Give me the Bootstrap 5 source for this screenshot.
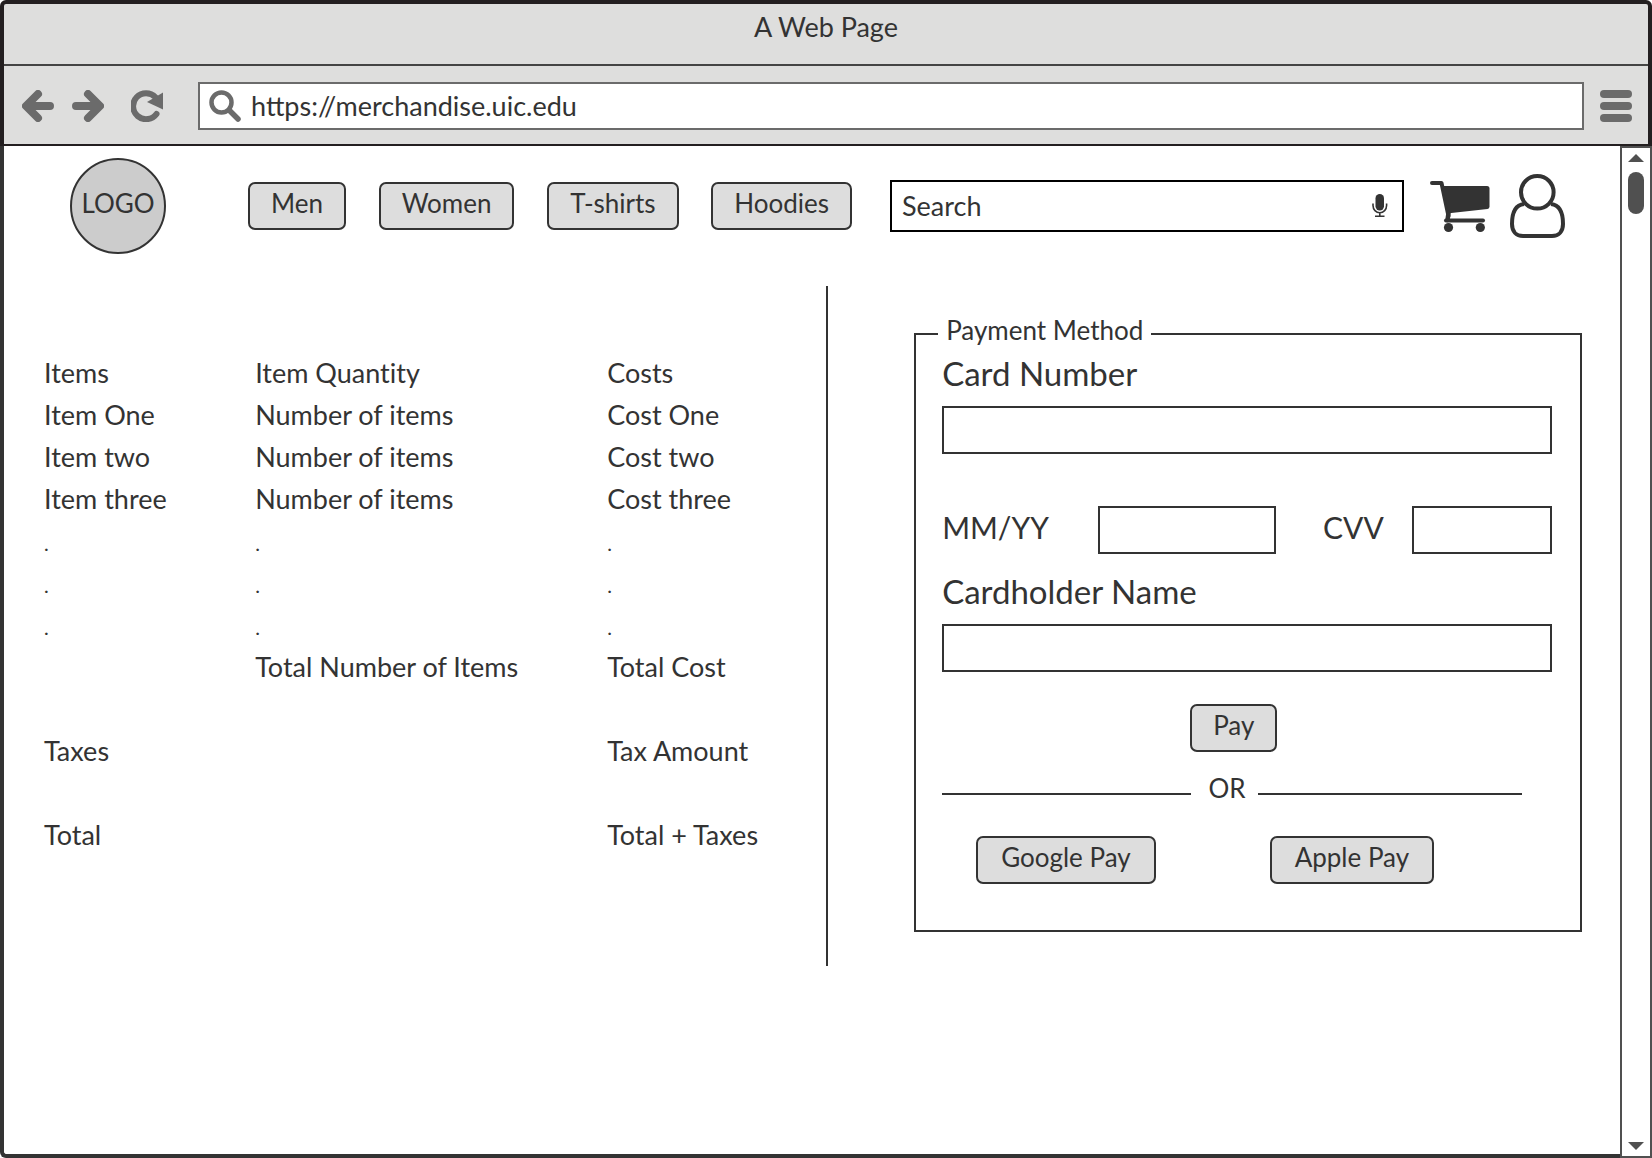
<!DOCTYPE html>
<html lang="en">
<head>
<meta charset="utf-8">
<meta name="viewport" content="width=device-width, initial-scale=1">
<title>A Web Page</title>
<link href="https://cdn.jsdelivr.net/npm/bootstrap@5.3.0/dist/css/bootstrap.min.css" rel="stylesheet">
<style>
  :root { --ink: #333; --frame: #231f20; --tool: #6b6b6b; --bar: #505050; }
  body { font-family: Lato, "Open Sans", sans-serif; font-size: 26px; line-height: 32px; font-variant-ligatures: none; color: var(--ink); background: #fff; }
  svg { display: block; flex: none; }

  .browser-top { background: #dededd; border: 4px solid var(--frame); border-bottom-width: 2px; border-radius: 6px 6px 0 0; }
  .title-strip { height: 62px; padding-top: 7px; border-bottom: 2px solid #444; font-size: 27px; }
  .tool-strip { height: 78px; padding: 2px 16px 0 18px; }
  .tool-btn { border: 0; background: none; padding: 0; color: var(--tool); }
  .tool-pair { gap: 18px; margin-right: 27px; }
  .url-box { height: 48px; background: #fff; border: 2px solid var(--tool); color: var(--tool); padding-left: 9px; margin: 0 16px 0 35px; min-width: 0; }
  .url-box input { border: 0; outline: 0; background: none; color: var(--ink); padding: 0 0 0 10px; min-width: 0; font-size: 27px; }

  .page-area { border-left: 4px solid var(--ink); border-bottom: 4px solid var(--ink); border-radius: 0 0 0 6px; min-width: 0; }
  .scroll-rail { width: 32px; border: 2px solid var(--bar); padding: 6px 0; }
  .scroll-rail svg { fill: var(--bar); }
  .scroll-thumb { width: 16px; height: 42px; border-radius: 8px; background: var(--bar); margin-top: 10px; }

  .site-head { padding: 12px 55px 32px 66px; }
  .logo-disc { width: 96px; height: 96px; border: 2px solid var(--ink); background: #ccc; color: var(--ink); padding-bottom: 6px; margin-right: 82px; flex: none; }
  .shop-nav { width: 604px; margin-right: 38px; }
  .btn-sketch { height: 48px; padding: 0 21px 6px; border: 2px solid var(--ink); border-radius: 7px; background: #ddd; color: var(--ink); font-size: 26px; line-height: 32px; }
  .btn-sketch:hover { background: #ccc; color: var(--ink); }
  .search-box { margin-right: 26px; min-width: 0; }
  .search-box input { height: 52px; border: 2px solid #000; padding: 0 48px 2px 10px; color: var(--ink); font-size: 27px; }
  .search-box input::placeholder { color: var(--ink); opacity: 1; }
  .search-box button { right: 16px; top: 14px; }
  .head-icons { gap: 20px; }

  .order-side { flex: 0 0 51%; padding: 66px 0 0 40px; border-right: 2px solid var(--ink); min-height: 680px; }
  .order-table { table-layout: fixed; font-size: 27px; }
  .order-table th, .order-table td { height: 42px; padding: 0; font-weight: 400; }
  .order-table .dot-row td { font-size: 20px; line-height: 32px; padding-top: 3px; }
  .col-items { width: 27%; }
  .col-qty { width: 45%; }

  .pay-side { padding: 28px 38px 0 86px; min-width: 0; }
  .pay-set { border: 2px solid var(--ink); padding: 0 28px 46px 26px; }
  .pay-set legend { float: none; width: auto; font-size: 26px; line-height: 32px; margin: 0 0 0 -4px; padding: 0 8px 8px; }
  .field-label { font-size: 30px; line-height: 38px; padding-bottom: 6px; }
  .stack-label { font-size: 33px; line-height: 38px; margin-bottom: 14px; }
  .pay-set .form-control { height: 48px; border: 2px solid var(--ink); border-radius: 0; padding: 0 8px; }
  .card-grid { display: grid; grid-template-columns: 156fr 178fr 136fr 140fr; margin: 52px 0 18px; align-items: center; }
  .cvv-label { padding-left: 47px; }
  .pay-main { margin: 32px 0 20px 248px; }
  .or-line { padding-right: 30px; margin-bottom: 20px; }
  .or-line span { padding: 0 12px 12px 18px; }
  .or-line hr { margin: 0; border-top: 2px solid var(--ink); opacity: 1; }
  .or-line hr:first-child { flex: 248 1 0; }
  .or-line hr:last-child { flex: 264 1 0; }
  .wallets { gap: 114px; padding-left: 34px; }
  .wallets .btn-sketch { padding-left: 23px; padding-right: 23px; }
</style>
<script src="https://cdn.jsdelivr.net/npm/bootstrap@5.3.0/dist/js/bootstrap.bundle.min.js" defer></script>
</head>
<body>
<div class="d-flex flex-column min-vh-100">
  <header class="browser-top">
    <div class="title-strip text-center">A Web Page</div>
    <div class="tool-strip d-flex align-items-center">
      <div class="tool-pair d-flex">
        <button class="tool-btn" aria-label="Back"><svg width="32" height="32" viewBox="0 0 32 32" fill="none" stroke="currentColor" stroke-width="8" stroke-linecap="round" stroke-linejoin="round"><path d="M28 16H6M16 4L4 16L16 28"/></svg></button>
        <button class="tool-btn" aria-label="Forward"><svg width="32" height="32" viewBox="0 0 32 32" fill="none" stroke="currentColor" stroke-width="8" stroke-linecap="round" stroke-linejoin="round"><path d="M4 16H26M16 4L28 16L16 28"/></svg></button>
      </div>
      <button class="tool-btn" aria-label="Reload"><svg width="32" height="32" viewBox="0 0 32 32"><path d="M24.500 7.200A13 13 0 1 0 25.500 24" fill="none" stroke="currentColor" stroke-width="6" stroke-linecap="round"/><path d="M32 2.500V19.500L16 12Z" fill="currentColor"/></svg></button>
      <div class="url-box d-flex align-items-center flex-grow-1">
        <svg width="32" height="32" viewBox="0 0 32 32" fill="none" stroke="currentColor"><circle cx="12.500" cy="12.500" r="10" stroke-width="4.500"/><path d="M20.500 20.500L29 29" stroke-width="5.500" stroke-linecap="round"/></svg>
        <input class="flex-grow-1" type="url" value="https://merchandise.uic.edu" aria-label="Address">
      </div>
      <button class="tool-btn" aria-label="Menu"><svg width="32" height="32" viewBox="0 0 32 32" fill="currentColor"><rect width="32" height="8" rx="4"/><rect y="12" width="32" height="8" rx="4"/><rect y="24" width="32" height="8" rx="4"/></svg></button>
    </div>
  </header>

  <div class="d-flex flex-grow-1">
    <main class="page-area flex-grow-1">
      <div class="site-head d-flex align-items-center">
        <a href="#" class="logo-disc rounded-circle d-flex align-items-center justify-content-center text-decoration-none">LOGO</a>
        <nav class="shop-nav d-flex justify-content-between">
          <button class="btn btn-sketch">Men</button>
          <button class="btn btn-sketch">Women</button>
          <button class="btn btn-sketch">T-shirts</button>
          <button class="btn btn-sketch">Hoodies</button>
        </nav>
        <form class="search-box position-relative flex-grow-1" role="search">
          <input class="w-100 d-block" type="search" placeholder="Search" aria-label="Search">
          <button type="button" class="tool-btn position-absolute" aria-label="Voice search"><svg width="16" height="24" viewBox="0 0 16 24"><rect x="3.500" y="0" width="8.500" height="16.500" rx="4.200" fill="#333"/><path d="M1 9.500V11.500A6.800 7.200 0 0 0 14.600 11.500V9.500M7.800 18.500V22M3 22.200H12.500" fill="none" stroke="#333" stroke-width="1.600"/></svg></button>
        </form>
        <div class="head-icons d-flex align-items-center">
          <a href="#" aria-label="Cart"><svg width="60" height="54" viewBox="0 0 60 54"><path d="M2 4H11.500L18.500 37" fill="none" stroke="#333" stroke-width="4" stroke-linecap="round" stroke-linejoin="round"/><path d="M12 7H57Q59.500 7 59.500 9.500V27.500Q59.500 29.500 57.500 30L19 34.200Z" fill="#333"/><path d="M18.500 34L17.500 41" stroke="#333" stroke-width="4.500" stroke-linecap="round"/><path d="M16 41.500H53" stroke="#333" stroke-width="4" stroke-linecap="round"/><circle cx="18.500" cy="48.500" r="4.600" fill="#333"/><circle cx="50.300" cy="48.500" r="4.600" fill="#333"/></svg></a>
          <a href="#" aria-label="Account"><svg width="55" height="64" viewBox="0 0 55 64" fill="none" stroke="#333" stroke-width="4"><circle cx="27.300" cy="18.300" r="16.300"/><path d="M14 30C5 31 2 40 2 50C2 57 6 62 13 62H42C49 62 53 57 53 50C53 40 50 31 41 30"/></svg></a>
        </div>
      </div>

      <div class="d-flex">
        <section class="order-side">
          <table class="order-table w-100">
            <colgroup><col class="col-items"><col class="col-qty"><col></colgroup>
            <thead><tr><th scope="col">Items</th><th scope="col">Item Quantity</th><th scope="col">Costs</th></tr></thead>
            <tbody>
              <tr><td>Item One</td><td>Number of items</td><td>Cost One</td></tr>
              <tr><td>Item two</td><td>Number of items</td><td>Cost two</td></tr>
              <tr><td>Item three</td><td>Number of items</td><td>Cost three</td></tr>
              <tr class="dot-row"><td>.</td><td>.</td><td>.</td></tr>
              <tr class="dot-row"><td>.</td><td>.</td><td>.</td></tr>
              <tr class="dot-row"><td>.</td><td>.</td><td>.</td></tr>
              <tr><td></td><td>Total Number of Items</td><td>Total Cost</td></tr>
              <tr><td></td><td></td><td></td></tr>
              <tr><td>Taxes</td><td></td><td>Tax Amount</td></tr>
              <tr><td></td><td></td><td></td></tr>
              <tr><td>Total</td><td></td><td>Total + Taxes</td></tr>
            </tbody>
          </table>
        </section>

        <section class="pay-side flex-grow-1">
          <form>
            <fieldset class="pay-set">
              <legend>Payment Method</legend>
              <label class="stack-label d-block" for="cardNumber">Card Number</label>
              <input class="form-control" id="cardNumber" type="text">
              <div class="card-grid">
                <label class="field-label" for="expiry">MM/YY</label>
                <input class="form-control" id="expiry" type="text">
                <label class="field-label cvv-label" for="cvv">CVV</label>
                <input class="form-control" id="cvv" type="text">
              </div>
              <label class="stack-label d-block" for="holder">Cardholder Name</label>
              <input class="form-control" id="holder" type="text">
              <button type="button" class="btn btn-sketch pay-main d-block">Pay</button>
              <div class="or-line d-flex align-items-center">
                <hr><span>OR</span><hr>
              </div>
              <div class="wallets d-flex">
                <button type="button" class="btn btn-sketch">Google Pay</button>
                <button type="button" class="btn btn-sketch">Apple Pay</button>
              </div>
            </fieldset>
          </form>
        </section>
      </div>
    </main>
    <div class="scroll-rail d-flex flex-column align-items-center flex-shrink-0" aria-hidden="true">
      <svg width="16" height="8" viewBox="0 0 16 8"><path d="M0 8L8 0L16 8Z"/></svg>
      <div class="scroll-thumb"></div>
      <svg class="mt-auto" width="16" height="8" viewBox="0 0 16 8"><path d="M0 0H16L8 8Z"/></svg>
    </div>
  </div>
</div>
</body>
</html>
